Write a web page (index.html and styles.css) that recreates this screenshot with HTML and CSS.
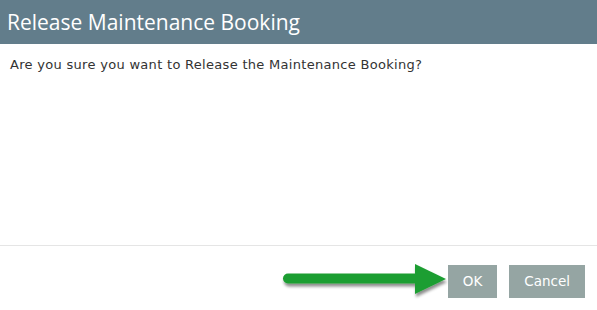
FILE: index.html
```html
<!DOCTYPE html>
<html>
<head>
<meta charset="utf-8">
<link rel="stylesheet" href="styles.css">
</head>
<body>
<div class="dialog">
  <div class="header"><span class="title">Release Maintenance Booking</span></div>
  <div class="content">
    <p class="message">Are you sure you want to Release the Maintenance Booking?</p>
  </div>
  <div class="footer">
    <svg class="arrow" width="170" height="40" viewBox="0 0 170 40">
      <defs>
        <filter id="sh" x="-10%" y="-30%" width="120%" height="170%">
          <feDropShadow dx="1" dy="3" stdDeviation="1.6" flood-color="#000" flood-opacity="0.45"/>
        </filter>
      </defs>
      <g filter="url(#sh)">
        <line x1="9" y1="17.5" x2="140" y2="17.5" stroke="#1f9e33" stroke-width="10" stroke-linecap="round"/>
        <polygon points="136,3 167,18 136,33" fill="#1f9e33"/>
      </g>
    </svg>
    <button class="btn">OK</button>
    <button class="btn">Cancel</button>
  </div>
</div>
</body>
</html>
```
FILE: styles.css
```css
html, body {
  margin: 0;
  padding: 0;
  background: #ffffff;
}
.dialog {
  width: 597px;
  height: 310px;
  display: flex;
  flex-direction: column;
}
.header {
  height: 44px;
  background: #627d8b;
  display: flex;
  align-items: center;
  padding-left: 7px;
  box-sizing: border-box;
}
.title {
  font-family: "Open Sans", sans-serif;
  font-size: 21px;
  color: #ffffff;
  margin-top: -1px;
}
.content {
  height: 202px;
  box-sizing: border-box;
  border-bottom: 1px solid #e5e5e5;
  padding: 13px 10px 0;
}
.message {
  margin: 0;
  font-family: "DejaVu Sans", Verdana, sans-serif;
  font-size: 13px;
  letter-spacing: 0.3px;
  color: #333333;
}
.footer {
  display: flex;
  justify-content: flex-end;
  align-items: center;
  padding: 15px 12px 0 0;
  gap: 12px;
}
.arrow {
  margin-right: -13px;
  display: block;
}
.btn {
  height: 33px;
  border: none;
  background: #95a5a3;
  color: #ffffff;
  font-family: "DejaVu Sans", Verdana, sans-serif;
  font-size: 13.5px;
  padding: 0 15px;
  margin: 0;
}
```
